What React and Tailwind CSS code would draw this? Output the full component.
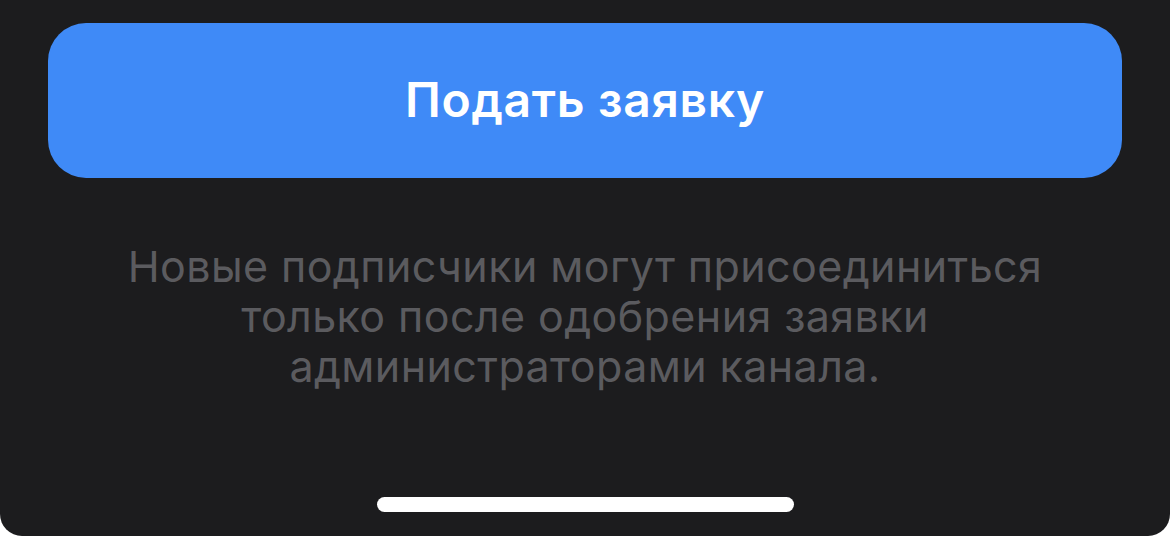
export default function App() {
  return (
    <div className="w-[1170px] h-[536px] bg-white">
      <div
        className="flex flex-col h-full bg-[#1c1c1e] rounded-b-[22px] px-12 pt-[23px]"
        style={{ fontFamily: 'Inter, "Noto Sans", sans-serif' }}
      >
        {/* primary action */}
        <button className="h-[155px] w-full rounded-[38px] bg-[#3f8af7] text-white text-[48px] font-semibold tracking-[0.7px] pb-[2px]">
          Подать заявку
        </button>

        <p className="mt-[63px] text-center text-[43px] leading-[50px] tracking-[0.4px] text-[#5b5b5f]">
          Новые подписчики могут присоединиться
          <br />
          только после одобрения заявки
          <br />
          администраторами канала.
        </p>

        {/* home indicator */}
        <div className="mt-auto mb-[24px] flex justify-center">
          <div className="h-[15px] w-[417px] rounded-full bg-white" />
        </div>
      </div>
    </div>
  );
}
